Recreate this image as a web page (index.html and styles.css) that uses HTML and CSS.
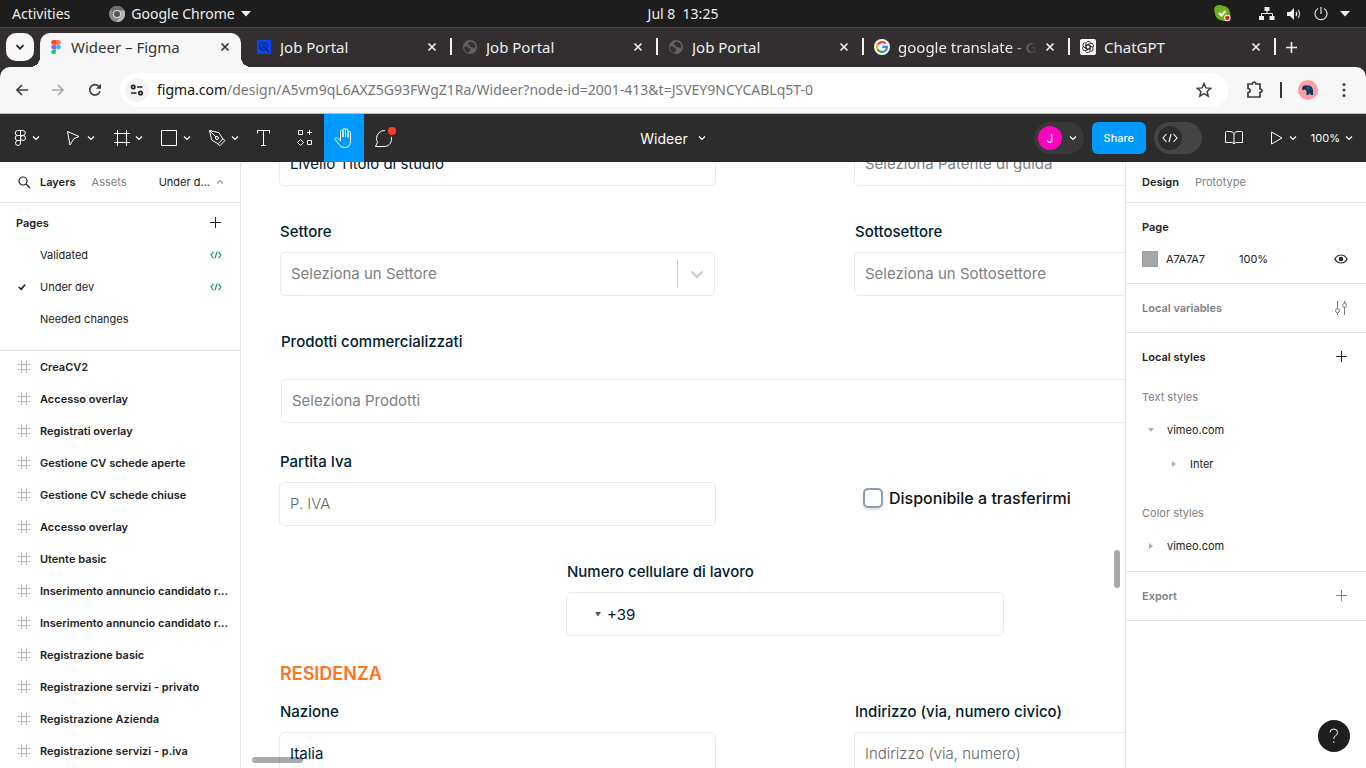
FILE: index.html
```html
<!DOCTYPE html>
<html lang="it">
<head>
<meta charset="utf-8">
<meta name="viewport" content="width=device-width, initial-scale=1">
<title>Wideer – Figma</title>
<link rel="stylesheet" href="styles.css">
</head>
<body>
<svg class="sprite" aria-hidden="true">
  <symbol id="chev" viewBox="0 0 8 8"><path d="M1 2.500l3 3 3-3" fill="none" stroke="currentColor" stroke-width="1.200"/></symbol>
  <symbol id="close" viewBox="0 0 10 10"><path d="M1.500 1.500l7 7M8.500 1.500l-7 7" fill="none" stroke="currentColor" stroke-width="1.700"/></symbol>
  <symbol id="plus" viewBox="0 0 12 12"><path d="M5.500 0v11M0 5.500h11" fill="none" stroke="currentColor"/></symbol>
  <symbol id="code" viewBox="0 0 12 8"><path d="M3.500 .8L1 4l2.500 3.200M8.500 .8L11 4 8.500 7.200M7 .8L5 7.200" fill="none" stroke="currentColor" stroke-width="1.200"/></symbol>
  <symbol id="hash" viewBox="0 0 12 12"><path d="M3.500 0v12M8.500 0v12M0 3.500h12M0 8.500h12" fill="none" stroke="currentColor"/></symbol>
  <symbol id="globe" viewBox="0 0 14 14"><circle cx="7" cy="7" r="7" fill="#5f6368"/><path d="M1.200 6.200l3 .4 1.600 1.600 1.800.6-.8 1.800-1.300 2.300C3 12.500 1 10 1.200 6.200zM6 2.200l1.800-.8 3 1.600 1.700 3-1.200 2.400-1.800-1.200-2.400-.2L6.300 5 4.500 4.600z" fill="#332f30"/></symbol>
</svg>

<header class="sysbar">
  <div class="sys-left">
    <button class="sys-btn">Activities</button>
    <button class="sys-btn sys-app">
      <svg width="16" height="16" viewBox="0 0 16 16"><circle cx="8" cy="8" r="8" fill="#8b8b8b"/><path d="M8 0a8 8 0 0 1 7 4H8a4 4 0 0 0-3.700 2.500L1.500 3.300A8 8 0 0 1 8 0z" fill="#6d6d6d"/><path d="M15 4a8 8 0 0 1-7.500 12l3.700-5.500A4 4 0 0 0 11 5.300z" fill="#b5b5b5"/><circle cx="8" cy="8" r="4" fill="#ddd"/><circle cx="8" cy="8" r="3" fill="#555"/></svg>
      <span>Google Chrome</span>
      <svg width="10" height="6" viewBox="0 0 10 6"><path d="M0 0h10L5 5.500z" fill="#eee"/></svg>
    </button>
  </div>
  <button class="sys-btn clock">Jul 8&nbsp; 13:25</button>
  <div class="sys-right">
    <svg class="skype" width="17" height="17" viewBox="0 0 17 17"><path d="M4.500 0C7 0 7.500.6 9 .8c4 .4 7 3.600 6.900 7.500.6 1 .7 2.500.4 3.700-.5 2.600-2.500 4-5 4-1.500 0-2-.4-3-.6C4 15.200 1 12 .9 8-.8 4 .6.300 4.500 0z" fill="#6ab01c"/><path d="M5 8l2.500 2.500L11.500 6" fill="none" stroke="#fff" stroke-width="2"/><circle cx="13.300" cy="13" r="3.200" fill="#fff"/><circle cx="13.300" cy="13" r="2.300" fill="#e8262b"/></svg>
    <svg width="16" height="14" viewBox="0 0 16 14"><path d="M5.500 0h5v4h-5zM0 9h5v4H0zM10.500 9h5v4h-5z" fill="#eee"/><path d="M8 4v3M2.500 9V6.500h11V9" fill="none" stroke="#eee"/></svg>
    <svg width="15" height="12" viewBox="0 0 15 12"><path d="M0 4h3l4-4v12L3 8H0z" fill="#eee"/><path d="M9 4q1.500 2 0 4" fill="none" stroke="#eee" stroke-width="1.300"/><path d="M11 2q3.200 4 0 8" fill="none" stroke="#bbb" stroke-width="1.300"/></svg>
    <svg width="14" height="14" viewBox="0 0 14 14"><path d="M7 0v7M4 1.500a6 6 0 1 0 6 0" fill="none" stroke="#ddd" stroke-width="1.200"/></svg>
    <svg width="10" height="6" viewBox="0 0 10 6"><path d="M0 0h10L5 5.500z" fill="#eee"/></svg>
  </div>
</header>

<nav class="tabs" aria-label="Schede">
  <button class="tab-search" aria-label="Cerca schede"><svg width="10" height="10" viewBox="0 0 10 10"><path d="M1.500 3.200L5 6.700l3.500-3.500" fill="none" stroke="#222" stroke-width="1.700"/></svg></button>
  <div class="tab tab-active">
    <svg width="14" height="16" viewBox="0 0 14 16"><path d="M4.500 1H7v4.700H4.500a2.350 2.350 0 0 1 0-4.700z" fill="#f24e1e"/><path d="M7 1h2.500a2.350 2.350 0 0 1 0 4.700H7z" fill="#ff7262"/><path d="M4.500 5.700H7v4.700H4.500a2.350 2.350 0 0 1 0-4.700z" fill="#a259ff"/><circle cx="9.400" cy="8" r="2.350" fill="#1abcfe"/><path d="M4.500 10.400H7v2.300a2.400 2.400 0 1 1-2.500-2.300z" fill="#0acf83"/></svg>
    <a href="#">Wideer – Figma</a>
    <button aria-label="Chiudi"><svg width="10" height="10"><use href="#close"/></svg></button>
  </div>
  <div class="tab">
    <svg class="favicon" viewBox="0 0 14 14"><path fill="#0a46e8" d="M0 0h14v14H0z"/><circle cx="6.500" cy="6.300" r="4" fill="none" stroke="#06226e"/><circle cx="6.500" cy="5.200" r="1.300" fill="#06226e"/><path d="M4 8.500q2.500-3 5 0M9.300 9.300l3 3" fill="none" stroke="#06226e" stroke-width="1.200"/></svg>
    <a href="#">Job Portal</a>
    <button aria-label="Chiudi"><svg width="10" height="10"><use href="#close"/></svg></button>
  </div>
  <div class="tab">
    <svg class="favicon"><use href="#globe"/></svg>
    <a href="#">Job Portal</a>
    <button aria-label="Chiudi"><svg width="10" height="10"><use href="#close"/></svg></button>
  </div>
  <div class="tab">
    <svg class="favicon"><use href="#globe"/></svg>
    <a href="#">Job Portal</a>
    <button aria-label="Chiudi"><svg width="10" height="10"><use href="#close"/></svg></button>
  </div>
  <div class="tab">
    <svg width="16" height="16" viewBox="0 0 16 16"><circle cx="8" cy="8" r="8" fill="#fff"/><g fill="none" stroke-width="2.200"><path d="M11.700 4.600A5 5 0 0 0 3.600 5.700" stroke="#ea4335"/><path d="M3.600 5.600a5 5 0 0 0 0 4.800" stroke="#fbbc05"/><path d="M3.600 10.300a5 5 0 0 0 7.600 1.500" stroke="#34a853"/><path d="M11 12a5 5 0 0 0 2-4.100H8.200" stroke="#4285f4"/></g></svg>
    <a href="#" class="fade">google translate - Go</a>
    <button aria-label="Chiudi"><svg width="10" height="10"><use href="#close"/></svg></button>
  </div>
  <div class="tab">
    <svg width="16" height="16" viewBox="0 0 16 16"><rect width="16" height="16" rx="2" fill="#fff"/><g fill="none" stroke="#222" stroke-width=".9"><path id="petal" d="M6 9.200V4.600a2.400 2.400 0 0 1 4.600-.8M6 6.800l3.700-2.100"/><use href="#petal" transform="rotate(60 8 8)"/><use href="#petal" transform="rotate(120 8 8)"/><use href="#petal" transform="rotate(180 8 8)"/><use href="#petal" transform="rotate(240 8 8)"/><use href="#petal" transform="rotate(300 8 8)"/></g></svg>
    <a href="#">ChatGPT</a>
    <button aria-label="Chiudi"><svg width="10" height="10"><use href="#close"/></svg></button>
  </div>
  <button class="tab-new" aria-label="Nuova scheda"><svg width="11" height="11" viewBox="0 0 11 11"><path d="M5.500 0v11M0 5.500h11" stroke="#eee" stroke-width="1.600"/></svg></button>
</nav>

<div class="browser-wrap">
<div class="browserbar">
  <button aria-label="Indietro"><svg width="12" height="12" viewBox="0 0 12 12"><path d="M12 6H1M6 1L1 6l5 5" fill="none" stroke="#3c3c3c" stroke-width="1.600"/></svg></button>
  <button aria-label="Avanti"><svg width="12" height="12" viewBox="0 0 12 12"><path d="M0 6h11M6 1l5 5-5 5" fill="none" stroke="#aaa" stroke-width="1.600"/></svg></button>
  <button aria-label="Ricarica"><svg width="14" height="14" viewBox="0 0 14 14"><path d="M12 8.200a5.200 5.200 0 1 1-1.300-5L12.500 5" fill="none" stroke="#3c3c3c" stroke-width="1.600"/><path d="M13 .8v5H8z" fill="#3c3c3c"/></svg></button>
  <div class="urlbar">
    <button class="site-info" aria-label="Informazioni sul sito"><svg width="14" height="12" viewBox="0 0 14 12"><g fill="none" stroke="#222" stroke-width="1.700"><circle cx="3.200" cy="3" r="1.700"/><path d="M7 3h5.500M1 9h5.500"/><circle cx="10.500" cy="9" r="1.700"/></g></svg></button>
    <a href="#" class="url"><b>figma.com</b>/design/A5vm9qL6AXZ5G93FWgZ1Ra/Wideer?node-id=2001-413&amp;t=JSVEY9NCYCABLq5T-0</a>
    <button aria-label="Aggiungi ai preferiti"><svg width="16" height="16" viewBox="0 0 16 16"><path d="M8 1.500l1.900 4.400 4.800.4-3.600 3.200 1.100 4.700L8 11.700l-4.200 2.500 1.100-4.700L1.300 6.300l4.800-.4z" fill="none" stroke="#3c3c3c" stroke-width="1.500"/></svg></button>
  </div>
  <button aria-label="Estensioni"><svg width="18" height="18" viewBox="0 0 18 18"><path d="M2 3h4.500q.2-2 1.700-2t1.700 2H14v5q2 .2 2 1.700T14 11.400V16H2v-4.500q2.200-.3 2.200-2T2 7.500z" fill="none" stroke="#3c3c3c" stroke-width="1.700"/></svg></button>
  <span class="bar-sep"></span>
  <button aria-label="Profilo"><svg width="20" height="20" viewBox="0 0 20 20"><circle cx="10" cy="10" r="10" fill="#ff9da6"/><path d="M4 8.500C4.300 5.800 7 4.800 9.300 5.500c3.400-.3 5.700 1.800 5.700 5V15h-2.600v-1.500h-1.500V15H8.500v-4L6.800 9.500 5 10.300 4.200 9.600z" fill="#123a5c"/><circle cx="10.200" cy="8" r="1.500" fill="#22648a"/></svg></button>
  <button aria-label="Menu"><svg width="4" height="16" viewBox="0 0 4 16"><g fill="#3c3c3c"><circle cx="2" cy="2.500" r="1.500"/><circle cx="2" cy="8" r="1.500"/><circle cx="2" cy="13.500" r="1.500"/></g></svg></button>
</div>
</div>

<div class="toolbar">
  <div class="tools">
    <button class="tool tool-menu" aria-label="Menu principale"><svg width="24" height="24" viewBox="0 0 24 24"><g fill="none" stroke="#fff"><path d="M12.500 4.500H9.700a2.500 2.500 0 0 0 0 5h2.800zM12.500 4.500h2.300a2.500 2.500 0 0 1 0 5h-2.300zM12.500 9.500H9.700a2.500 2.500 0 0 0 0 5h2.800zM12.500 14.500H9.700a2.500 2.500 0 1 0 2.800 2.500z"/><circle cx="15" cy="12" r="2.500"/></g></svg><svg width="8" height="8"><use href="#chev"/></svg></button>
    <button class="tool tool-wide" aria-label="Sposta"><svg width="24" height="24" viewBox="0 0 24 24"><path d="M6.500 5.500l11.500 5-5 2-4 6.500z" fill="none" stroke="#fff" stroke-linejoin="round"/></svg><svg width="8" height="8"><use href="#chev"/></svg></button>
    <button class="tool tool-wide" aria-label="Frame"><svg width="24" height="24" viewBox="0 0 24 24"><path d="M8.500 4v16M17.500 4v16M5 7.500h16M5 16.500h16" stroke="#fff"/></svg><svg width="8" height="8"><use href="#chev"/></svg></button>
    <button class="tool tool-wide" aria-label="Rettangolo"><svg width="24" height="24" viewBox="0 0 24 24"><path d="M4.500 4.500h15v15h-15z" fill="none" stroke="#fff"/></svg><svg width="8" height="8"><use href="#chev"/></svg></button>
    <button class="tool tool-wide" aria-label="Penna"><svg width="24" height="24" viewBox="0 0 24 24"><g fill="none" stroke="#fff" stroke-linejoin="round"><path d="M4.500 4.500l9.500 2.200 3.800 6.300-4.800 4.800-6.300-3.800z"/><path d="M4.500 4.500l6.500 6.500M18 12.500l1.800 2.200-5 5-2.300-1.800"/><circle cx="12" cy="12" r="1.500"/></g></svg><svg width="8" height="8"><use href="#chev"/></svg></button>
    <button class="tool" aria-label="Testo"><svg width="24" height="24" viewBox="0 0 24 24"><path d="M5.500 7.500v-3h12v3M11.500 4.500v15M9 19.500h5" fill="none" stroke="#fff"/></svg></button>
    <button class="tool" aria-label="Risorse"><svg width="24" height="24" viewBox="0 0 24 24"><path d="M6.500 4.500h4v4h-4zM15.500 14.500h4v4h-4zM17.500 4v5M15 6.500h5M8.500 13.500l3 3-3 3-3-3z" fill="none" stroke="#fff"/></svg></button>
    <button class="tool tool-on" aria-label="Mano"><svg width="24" height="24" viewBox="0 0 24 24"><path d="M8.500 13V5.500q0-1.300 1.200-1.300t1.300 1.300V11V3.800q0-1.300 1.300-1.300t1.200 1.300V11V4.300q0-1.300 1.300-1.300T16 4.300V11.500V6.500q0-1.200 1.200-1.200t1.300 1.200V15q0 6.500-6 6.500-3 0-4.500-2l-5-6q-.5-1 .5-1.500 1.200-.5 2 .3l3 2.700z" fill="none" stroke="#fff" stroke-linejoin="round"/></svg></button>
    <button class="tool" aria-label="Commenti"><svg width="24" height="24" viewBox="0 0 24 24"><path d="M13 4.500a8 8 0 0 0-8.500 8c0 1.500.3 2.600 1 3.700l-2 4.300H12c4.600 0 7.500-3.300 7.500-7.500 0-.8-.1-1.500-.3-2.200" fill="none" stroke="#fff" stroke-linejoin="round"/><circle cx="20" cy="5" r="4" fill="#ff3b2f"/></svg></button>
  </div>
  <button class="file-name">Wideer <svg width="8" height="8"><use href="#chev"/></svg></button>
  <div class="actions">
    <button class="user"><span class="avatar">J</span><svg width="8" height="8"><use href="#chev"/></svg></button>
    <button class="share">Share</button>
    <button class="devmode" aria-label="Dev Mode"><span class="knob"><svg width="16" height="10" viewBox="0 0 16 10"><path d="M4.500 1L1 5l3.500 4M11.500 1L15 5l-3.500 4M9 1L7 9" fill="none" stroke="#fff" stroke-width="1.100"/></svg></span></button>
    <button class="book" aria-label="Librerie"><svg width="18" height="14" viewBox="0 0 18 14"><path d="M9 2.500Q7.500.5 5 .5H1.500Q.5.5.5 1.500v10h6.300Q8.500 11.500 9 13q.5-1.500 2.200-1.500h6.300v-10q0-1-1-1H13Q10.500.5 9 2.500zV13" fill="none" stroke="#fff"/></svg></button>
    <button class="play" aria-label="Presenta"><svg width="13" height="14" viewBox="0 0 13 14"><path d="M1.500 1v12L12 7z" fill="none" stroke="#fff" stroke-linejoin="round"/></svg><svg width="8" height="8"><use href="#chev"/></svg></button>
    <button class="zoom">100%<svg width="8" height="8"><use href="#chev"/></svg></button>
  </div>
</div>

<div class="workspace">
  <aside class="left">
    <div class="panel-tabs left-tabs">
      <button aria-label="Cerca"><svg width="13" height="13" viewBox="0 0 13 13"><circle cx="5" cy="5" r="4" fill="none" stroke="#222" stroke-width="1.200"/><path d="M8 8l4 4" stroke="#222" stroke-width="1.300"/></svg></button>
      <button class="strong">Layers</button>
      <button class="muted">Assets</button>
      <button class="page-pick"><span>Under d...</span><svg class="flip" width="8" height="8"><use href="#chev"/></svg></button>
    </div>
    <section class="pages">
      <div class="row"><h2>Pages</h2><button aria-label="Aggiungi pagina"><svg width="12" height="12"><use href="#plus"/></svg></button></div>
      <div class="row page"><span class="tick"></span><a href="#">Validated</a><svg class="green" width="12" height="8"><use href="#code"/></svg></div>
      <div class="row page"><span class="tick"><svg width="8" height="8" viewBox="0 0 8 8"><path d="M.8 4l2.400 2.300L7.200 1.500" fill="none" stroke="#222" stroke-width="1.700"/></svg></span><a href="#">Under dev</a><svg class="green" width="12" height="8"><use href="#code"/></svg></div>
      <div class="row page"><span class="tick"></span><a href="#">Needed changes</a></div>
    </section>
    <ul class="layers">
      <li><svg width="12" height="12"><use href="#hash"/></svg><a href="#">CreaCV2</a></li>
      <li><svg width="12" height="12"><use href="#hash"/></svg><a href="#">Accesso overlay</a></li>
      <li><svg width="12" height="12"><use href="#hash"/></svg><a href="#">Registrati overlay</a></li>
      <li><svg width="12" height="12"><use href="#hash"/></svg><a href="#">Gestione CV schede aperte</a></li>
      <li><svg width="12" height="12"><use href="#hash"/></svg><a href="#">Gestione CV schede chiuse</a></li>
      <li><svg width="12" height="12"><use href="#hash"/></svg><a href="#">Accesso overlay</a></li>
      <li><svg width="12" height="12"><use href="#hash"/></svg><a href="#">Utente basic</a></li>
      <li><svg width="12" height="12"><use href="#hash"/></svg><a href="#">Inserimento annuncio candidato r...</a></li>
      <li><svg width="12" height="12"><use href="#hash"/></svg><a href="#">Inserimento annuncio candidato r...</a></li>
      <li><svg width="12" height="12"><use href="#hash"/></svg><a href="#">Registrazione basic</a></li>
      <li><svg width="12" height="12"><use href="#hash"/></svg><a href="#">Registrazione servizi - privato</a></li>
      <li><svg width="12" height="12"><use href="#hash"/></svg><a href="#">Registrazione Azienda</a></li>
      <li><svg width="12" height="12"><use href="#hash"/></svg><a href="#">Registrazione servizi - p.iva</a></li>
    </ul>
  </aside>

  <main class="canvas">
    <form class="artboard">
      <div class="cols">
        <select class="box dark" aria-label="Livello Titolo di studio"><option>Livello Titolo di studio</option></select>
        <select class="box" aria-label="Patente di guida"><option>Seleziona Patente di guida</option></select>
      </div>
      <div class="cols">
        <div class="field">
          <label for="settore">Settore</label>
          <div class="picker">
            <select class="box" id="settore"><option>Seleziona un Settore</option></select>
            <span class="picker-arrow"><svg width="14" height="9" viewBox="0 0 14 9"><path d="M1.500 1.500L7 7l5.500-5.500" fill="none" stroke="#ccc" stroke-width="2.400"/></svg></span>
          </div>
        </div>
        <div class="field"><label for="sotto">Sottosettore</label><select class="box" id="sotto"><option>Seleziona un Sottosettore</option></select></div>
      </div>
      <div class="field field-products"><label for="prodotti">Prodotti commercializzati</label><select class="box" id="prodotti"><option>Seleziona Prodotti</option></select></div>
      <div class="cols cols-iva">
        <div class="field"><label for="iva">Partita Iva</label><input class="box" id="iva" type="text" placeholder="P. IVA"></div>
        <div class="move"><input type="checkbox" id="move"><label for="move">Disponibile a trasferirmi</label></div>
      </div>
      <div class="field field-phone"><label for="phone">Numero cellulare di lavoro</label>
        <div class="box phone"><svg width="6" height="5" viewBox="0 0 6 5"><path d="M0 0h6L3 4.500z" fill="#555"/></svg><input id="phone" type="tel" value="+39"></div>
      </div>
      <h1>RESIDENZA</h1>
      <div class="cols cols-last">
        <div class="field"><label for="nazione">Nazione</label><input class="box dark" id="nazione" type="text" value="Italia"></div>
        <div class="field"><label for="via">Indirizzo (via, numero civico)</label><input class="box" id="via" type="text" placeholder="Indirizzo (via, numero)"></div>
      </div>
    </form>
    <span class="thumb-v"></span>
    <span class="thumb-h"></span>
  </main>

  <aside class="right">
    <div class="panel-tabs"><button class="strong">Design</button><button class="muted">Prototype</button></div>
    <section>
      <div class="row"><h2>Page</h2></div>
      <div class="row fill"><span class="swatch"></span><span class="hex">A7A7A7</span><span>100%</span>
        <button aria-label="Visibilità"><svg width="14" height="10" viewBox="0 0 14 10"><path d="M.8 5Q3 1 7 1t6.200 4Q11 9 7 9T.8 5z" fill="none" stroke="#222" stroke-width="1.200"/><circle cx="7" cy="5" r="2.200" fill="#222"/></svg></button></div>
    </section>
    <section>
      <div class="row"><h2 class="muted">Local variables</h2><button aria-label="Variabili"><svg width="14" height="14" viewBox="0 0 14 14"><g fill="none" stroke="#777"><path d="M3.500 0v7.500M3.500 12v2M10.500 0v2M10.500 6.500V14"/><circle cx="3.500" cy="9.700" r="2"/><circle cx="10.500" cy="4.300" r="2"/></g></svg></button></div>
    </section>
    <section>
      <div class="row"><h2>Local styles</h2><button aria-label="Aggiungi stile"><svg width="12" height="12"><use href="#plus"/></svg></button></div>
      <h3>Text styles</h3>
      <a class="style" href="#"><svg width="6" height="6" viewBox="0 0 6 6"><path d="M0 1h6L3 5z" fill="#b0b0b0"/></svg>vimeo.com</a>
      <a class="style nested" href="#"><svg width="6" height="6" viewBox="0 0 6 6"><path d="M1 0v6l4-3z" fill="#b0b0b0"/></svg>Inter</a>
      <h3 class="color-title">Color styles</h3>
      <a class="style" href="#"><svg width="6" height="6" viewBox="0 0 6 6"><path d="M1 0v6l4-3z" fill="#b0b0b0"/></svg>vimeo.com</a>
    </section>
    <section>
      <div class="row"><h2 class="muted">Export</h2><button class="muted" aria-label="Aggiungi esportazione"><svg width="12" height="12"><use href="#plus"/></svg></button></div>
    </section>
    <button class="help" aria-label="Aiuto"><svg width="10" height="16" viewBox="0 0 10 16"><path d="M1 4.500Q1 1 4.800 1T8.600 4.500Q8.600 6.500 6.500 7.800T4.800 11" fill="none" stroke="#fff"/><circle cx="4.800" cy="14" r=".7" fill="#fff"/></svg></button>
  </aside>
</div>
</body>
</html>
```
FILE: styles.css
```css
* { box-sizing: border-box; }
body {
  margin: 0;
  height: 100vh;
  display: flex;
  flex-direction: column;
  overflow: hidden;
  font-family: Inter, "Liberation Sans", sans-serif;
  font-size: 11px;
  color: #222;
  background: #fff;
}
button { border: 0; padding: 0; background: none; color: inherit; font: inherit; }
button, a { display: flex; align-items: center; }
a { color: inherit; text-decoration: none; }
svg { flex: none; display: block; }
h1, h2, h3, ul { margin: 0; padding: 0; }
.sprite { position: absolute; width: 0; height: 0; }

/* system bar */
.sysbar {
  display: grid;
  grid-template-columns: 1fr auto 1fr;
  height: 28px;
  flex: none;
  background: #1d1d1d;
  border-bottom: 1px solid #454545;
  color: #eee;
  font: 14px "Noto Sans", sans-serif;
}
.sys-left { display: flex; gap: 39px; padding-left: 12px; }
.sys-app { gap: 6px; }
.sys-right { display: flex; align-items: center; justify-content: flex-end; gap: 12px; padding-right: 16px; }
.skype { margin-right: 16px; }

/* browser tabs */
.tabs {
  display: flex;
  height: 39px;
  flex: none;
  padding: 5px 69px 0 6px;
  background: #332f30;
  color: #eee;
  font: 15px "Noto Sans", sans-serif;
}
.tab-search { width: 28px; height: 28px; flex: none; margin-right: 6px; justify-content: center; border-radius: 10px; background: #f7f7f7; }
.tab { position: relative; display: flex; align-items: center; gap: 8px; flex: 1 1 0; min-width: 0; height: 28px; padding: 0 13px 0 10px; }
.favicon { width: 14px; height: 14px; margin: 0 1px; }
.tab a { flex: 1; min-width: 0; overflow: hidden; white-space: nowrap; line-height: 20px; }
.tab:not(.tab-active) { border-right: 2px solid #f2f2f2; border-image: linear-gradient(transparent 20%, #f2f2f2 20%, #f2f2f2 78%, transparent 78%) 1; }
.fade { -webkit-mask-image: linear-gradient(90deg, #000 80%, transparent); mask-image: linear-gradient(90deg, #000 80%, transparent); }
.tab-active { height: 34px; padding: 0 11px 6px 9px; margin-right: 5px; border-radius: 10px 10px 0 0; background: #f7f7f7; color: #333; }
.tab-active::before, .tab-active::after { content: ""; position: absolute; bottom: 0; width: 10px; height: 10px; }
.tab-active::before { right: 100%; background: radial-gradient(circle at 0 0, transparent 10px, #f7f7f7 10px); }
.tab-active::after { left: 100%; background: radial-gradient(circle at 100% 0, transparent 10px, #f7f7f7 10px); }
.tab-new { height: 28px; padding-left: 10px; }

/* address bar */
.browser-wrap { flex: none; background: #332f30; }
.browserbar { display: flex; align-items: center; height: 47px; padding: 0 20px 1px 16px; background: #f7f7f7; border-radius: 10px 10px 0 0; border-bottom: 1px solid #b9bdbd; }
.browserbar > button { margin-right: 24px; }
.browserbar > button:nth-child(3) { margin-right: 18px; }
.browserbar > button:last-child { margin-right: 0; }
.urlbar { display: flex; align-items: center; flex: 1; min-width: 0; height: 34px; margin-right: 18px; padding: 0 16px 0 5px; border-radius: 17px; background: #fff; }
.site-info { width: 24px; height: 24px; justify-content: center; border-radius: 12px; background: #f3f3f3; }
.url { flex: 1; min-width: 0; margin-left: 8px; overflow: hidden; white-space: nowrap; color: #757575; font: 14px "Noto Sans", sans-serif; }
.url b { color: #111; font-weight: 400; }
.browserbar > .bar-sep { width: 2px; height: 16px; margin: 0 16px 0 -8px; background: #333; }

/* editor toolbar */
.toolbar { display: grid; grid-template-columns: 1fr auto 1fr; height: 48px; flex: none; background: #2c2c2c; color: #fff; }
.tools { display: flex; }
.tool { width: 40px; justify-content: center; }
.tool-wide { width: 48px; justify-content: flex-start; padding-left: 9px; gap: 2px; }
.tool-menu { width: 52px; justify-content: flex-start; padding-left: 8px; }
.tool-on { background: #0099ff; }
.file-name { gap: 10px; padding-right: 20px; font-size: 14px; }
.actions { display: flex; align-items: center; justify-content: flex-end; padding-right: 13px; }
.user { gap: 7px; width: 50px; height: 32px; padding-left: 4px; border-radius: 16px; background: #383838; }
.avatar { display: grid; place-items: center; width: 24px; height: 24px; border-radius: 12px; background: #ff00bf; font-size: 12px; }
.share { width: 54px; height: 32px; margin: 0 8px; justify-content: center; border-radius: 6px; background: #0099ff; font-weight: 500; }
.devmode { width: 48px; height: 32px; padding-left: 4px; border-radius: 16px; background: #444; }
.knob { display: grid; place-items: center; width: 24px; height: 24px; border-radius: 12px; background: #2c2c2c; }
.book { margin-left: 23px; }
.play { margin-left: 27px; gap: 6px; }
.zoom { margin-left: 14px; gap: 5px; }

/* panels */
.workspace { display: flex; flex: 1; min-height: 0; }
.left, .right { position: relative; flex: none; width: 241px; overflow: hidden; background: #fff; }
.left { border-right: 1px solid #e6e6e6; }
.right { border-left: 1px solid #e6e6e6; }
.panel-tabs { display: flex; gap: 16px; height: 41px; padding: 0 16px; border-bottom: 1px solid #e6e6e6; }
.left-tabs { padding-left: 18px; }
.left-tabs > button:first-child { margin-right: -7px; }
.strong, h2 { font-size: 11px; font-weight: 600; }
.muted { color: #808080; }
.page-pick { margin-left: auto; gap: 6px; }
.flip { transform: rotate(180deg); color: #999; }
.row { display: flex; align-items: center; justify-content: space-between; height: 32px; }
.pages { padding: 4px 18px 15px 16px; border-bottom: 1px solid #e6e6e6; }
.tick { width: 24px; padding-left: 2px; }
.page a { flex: 1; }
.green { color: #1a9d5f; }
.layers { list-style: none; }
.layers li { display: flex; align-items: center; gap: 10px; height: 32px; padding-left: 18px; color: #b3b3b3; }
.layers a { color: #222; font-weight: 600; white-space: nowrap; }

.right section { padding: 8px 18px 8px 16px; border-bottom: 1px solid #e6e6e6; }
.fill button { margin-left: auto; }
.swatch { width: 16px; height: 16px; margin-right: 8px; background: #a7a7a7; border: 1px solid #9c9c9c; }
.hex { width: 73px; }
h3 { margin-top: 8px; font-size: 11px; font-weight: 400; line-height: 32px; color: #808080; }
.color-title { margin-top: 16px; }
.style { gap: 13px; height: 34px; padding-left: 6px; }
.nested { padding-left: 29px; }
.help { position: absolute; right: 16px; bottom: 16px; width: 32px; height: 32px; justify-content: center; border-radius: 16px; background: #1e1e1e; }

/* canvas */
.canvas { position: relative; flex: 1; min-width: 0; overflow: hidden; background: #fff; }
.artboard { width: 1012px; margin: -20px 0 0 38px; color: #001c2e; font-size: 15px; }
.cols { display: grid; grid-template-columns: 1fr 1fr; column-gap: 138px; margin-bottom: 36px; }
.field { display: flex; flex-direction: column; gap: 10px; }
.field label { padding-left: 1px; font-weight: 500; line-height: 20px; }
.box {
  appearance: none;
  display: block;
  width: 100%;
  height: 44px;
  margin: 0;
  padding: 0 10px 2px;
  border: 1px solid #ebebeb;
  border-radius: 5px;
  outline: 0;
  background: #fff;
  color: #808080;
  font: 400 15px Inter, sans-serif;
}
.box::placeholder { color: #666; font-weight: 300; opacity: 1; }
.dark { color: #001c2e; }
.picker { position: relative; margin: 0 1px; }
.picker-arrow { position: absolute; top: 8px; right: 0; display: grid; place-items: center; width: 38px; height: 28px; border-left: 1px solid #ccc; pointer-events: none; }
.field-products { gap: 27px; margin: 0 0 29px 2px; }
.field-products label { padding-left: 0; }
.move { display: flex; align-items: center; gap: 6px; height: 20px; margin-top: 36px; padding-left: 9px; color: #111; font-size: 16px; font-weight: 500; }
.move input { appearance: none; width: 20px; height: 20px; margin: 0; border: 2px solid #8d9bb5; border-radius: 5px; box-shadow: 0 2px 3px #0002; background: #fff; }
.field-phone { width: 438px; margin: 0 auto 26px; }
.phone { display: flex; align-items: center; gap: 6px; padding: 0 10px 0 28px; }
.phone input { flex: 1; min-width: 0; border: 0; padding: 0; outline: 0; background: none; color: #001c2e; font: 400 15px Inter, sans-serif; }
h1 { margin: 0 0 16px 1px; font-size: 18px; font-weight: 600; line-height: 24px; color: #ff7420; }
.thumb-v, .thumb-h { position: absolute; border-radius: 3px; background: #0005; }
.thumb-v { right: 5px; top: 388px; width: 6px; height: 38px; }
.thumb-h { left: 11px; bottom: 5px; width: 51px; height: 6px; }
```
